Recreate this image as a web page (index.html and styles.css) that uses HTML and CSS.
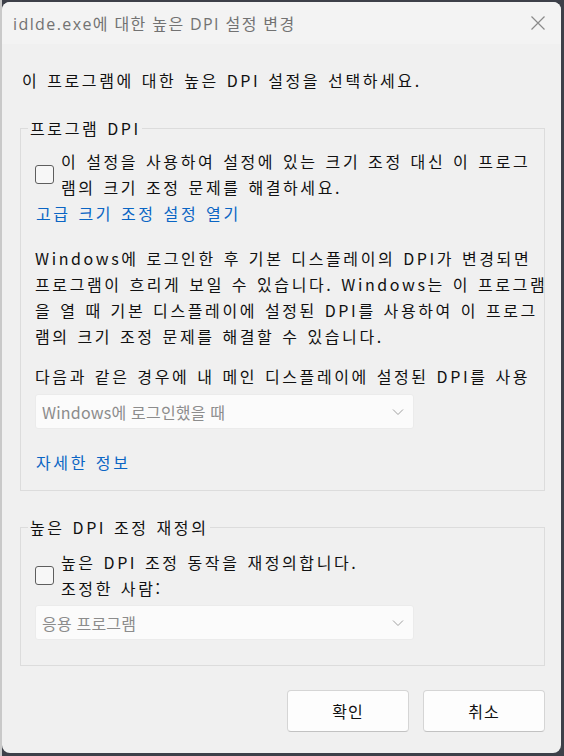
FILE: index.html
```html
<!DOCTYPE html>
<html lang="ko">
<head>
<meta charset="utf-8">
<link rel="stylesheet" href="styles.css">
</head>
<body>
<div class="window">
  <div class="titlebar">
    <span class="title">idlde.exe에 대한 높은 DPI 설정 변경</span>
    <svg class="close" width="16" height="16" viewBox="0 0 16 16"><path d="M1.5 1.5 L14.5 14.5 M14.5 1.5 L1.5 14.5" stroke="#8a8a8a" stroke-width="1.2" fill="none"/></svg>
  </div>
  <div class="content">
    <p class="intro">이 프로그램에 대한 높은 DPI 설정을 선택하세요.</p>

    <fieldset class="group group-one">
      <legend>프로그램 DPI</legend>
      <div class="check-row">
        <span class="checkbox"></span>
        <span class="check-text">이 설정을 사용하여 설정에 있는 크기 조정 대신 이 프로그<br>램의 크기 조정 문제를 해결하세요.</span>
      </div>
      <a class="link">고급 크기 조정 설정 열기</a>
      <p class="para">Windows에 로그인한 후 기본 디스플레이의 DPI가 변경되면<br>프로그램이 흐리게 보일 수 있습니다. Windows는 이 프로그램<br>을 열 때 기본 디스플레이에 설정된 DPI를 사용하여 이 프로그<br>램의 크기 조정 문제를 해결할 수 있습니다.</p>
      <p class="label">다음과 같은 경우에 내 메인 디스플레이에 설정된 DPI를 사용</p>
      <div class="combo">
        <span>Windows에 로그인했을 때</span>
        <svg width="12" height="8" viewBox="0 0 12 8"><path d="M1 1.5 L6 6.5 L11 1.5" stroke="#a0a0a0" stroke-width="1" fill="none"/></svg>
      </div>
      <a class="link more">자세한 정보</a>
    </fieldset>

    <fieldset class="group group-two">
      <legend>높은 DPI 조정 재정의</legend>
      <div class="check-row">
        <span class="checkbox"></span>
        <span class="check-text">높은 DPI 조정 동작을 재정의합니다.<br>조정한 사람:</span>
      </div>
      <div class="combo combo-two">
        <span>응용 프로그램</span>
        <svg width="12" height="8" viewBox="0 0 12 8"><path d="M1 1.5 L6 6.5 L11 1.5" stroke="#a0a0a0" stroke-width="1" fill="none"/></svg>
      </div>
    </fieldset>

    <div class="buttons">
      <button class="btn">확인</button>
      <button class="btn">취소</button>
    </div>
  </div>
</div>
</body>
</html>
```
FILE: styles.css
```css
html, body {
  margin: 0;
  padding: 0;
}
body {
  width: 564px;
  height: 756px;
  background: linear-gradient(to right, #c9c9c9 0 2px, #3d4049 2px);
  font-family: "Noto Sans CJK KR", sans-serif;
  overflow: hidden;
}
.window {
  margin: 2px 0 0 2px;
  width: 559px;
  height: 751px;
  border-radius: 8px;
  background: #f0f0f0;
  overflow: hidden;
  box-sizing: border-box;
}
.titlebar {
  height: 42px;
  background: #f3f3f3;
  display: flex;
  align-items: center;
  justify-content: space-between;
  padding: 0 15px 0 11px;
}
.title {
  font-family: "Open Sans", "Noto Sans CJK KR", sans-serif;
  font-size: 16px;
  color: #727272;
  letter-spacing: 1.4px;
  white-space: nowrap;
}
.close {
  display: block;
}
.content {
  padding: 23px 15px 0 18px;
  font-size: 16px;
  line-height: 26px;
  color: #111;
  letter-spacing: 2.6px;
  word-spacing: 0.8px;
  white-space: nowrap;
}
.intro {
  margin: 0 0 22px 2px;
}
.group {
  margin: 0;
  border: 1px solid #dcdcdc;
  padding: 7px 0 15px 14px;
  min-width: 0;
  width: 525px;
  box-sizing: border-box;
}
.group legend {
  margin-left: -7px;
  padding: 0 1px 0 2px;
}
.group-two {
  margin-top: 23px;
  padding: 9px 0 25px 14px;
}
.check-row {
  display: flex;
  align-items: center;
  gap: 7px;
}
.checkbox {
  width: 17px;
  height: 17px;
  border: 1px solid #5e5e5e;
  border-radius: 3px;
  background: #f7f7f7;
  flex: none;
}
.link {
  display: block;
  color: #0a65c4;
  margin-left: 1px;
}
.para {
  margin: 19px 0 14px 0;
}
.label {
  margin: 0 0 5px 0;
}
.combo {
  width: 379px;
  height: 35px;
  box-sizing: border-box;
  background: #fbfbfb;
  border: 1px solid #ebebeb;
  border-radius: 3px;
  display: flex;
  align-items: center;
  justify-content: space-between;
  padding: 0 9px 0 6px;
  color: #8c8c8c;
  letter-spacing: 0.2px;
  word-spacing: 0;
}
.combo-two {
  margin-top: 4px;
}
.combo svg {
  display: block;
}
.more {
  margin-top: 20px;
}
.buttons {
  display: flex;
  justify-content: flex-end;
  gap: 14px;
  margin-top: 24px;
  width: 525px;
}
.btn {
  width: 122px;
  height: 42px;
  background: #fdfdfd;
  border: 1px solid #d5d5d5;
  border-bottom-color: #c2c2c2;
  border-radius: 4px;
  font-family: "Noto Sans CJK KR", sans-serif;
  font-size: 16px;
  letter-spacing: 1px;
  color: #111;
  padding: 0;
}
```
